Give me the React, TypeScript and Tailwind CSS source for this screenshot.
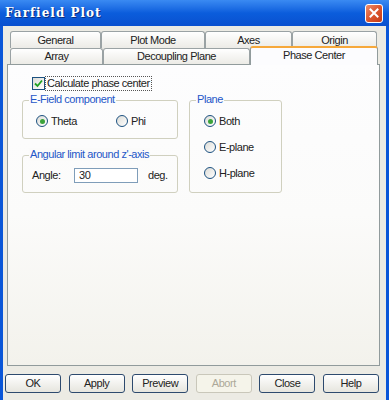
import React from "react";

const F = "font-['Liberation_Sans',Tahoma,sans-serif] tracking-[-0.45px]";

function Tab({ label, w, selected = false }: { label: string; w: number; selected?: boolean }) {
  if (selected) {
    return (
      <div
        className="relative z-10 mb-[-1px] h-[19px] flex items-center justify-center rounded-t-[3px] border-x border-[#919b9c] border-t-[2px] border-t-[#f6a83a] bg-[#fcfcfe] text-[11px] text-[#222] pb-[3px]"
        style={{ width: w }}
      >
        {label}
      </div>
    );
  }
  return (
    <div
      className="h-full flex items-center justify-center rounded-t-[3px] border border-b-0 border-[#9aa2a4] bg-gradient-to-b from-white to-[#ecebe6] text-[11px] text-[#222]"
      style={{ width: w }}
    >
      {label}
    </div>
  );
}

function Radio({ checked }: { checked?: boolean }) {
  return (
    <div className="w-[12px] h-[12px] shrink-0 rounded-full border border-[#1c5180] bg-gradient-to-br from-[#dcdcd7] to-white flex items-center justify-center">
      {checked && <div className="w-[5px] h-[5px] rounded-full bg-[#3aa33a]" />}
    </div>
  );
}

function Btn({ label, disabled }: { label: string; disabled?: boolean }) {
  return (
    <div
      className={
        "w-[56px] h-[19px] flex items-center justify-center rounded-[3px] border text-[11px] " +
        (disabled
          ? "border-[#c9c7ba] bg-[#f5f4ea] text-[#aca899]"
          : "border-[#2d4a6e] bg-gradient-to-b from-white to-[#e6e5de] text-[#222]")
      }
    >
      {label}
    </div>
  );
}

export default function App() {
  return (
    <div className={`w-[389px] h-[400px] bg-[#0a56d8] flex flex-col ${F}`}>
      {/* Title bar */}
      <div className="h-[26px] shrink-0 flex items-center justify-between pl-[5px] pr-[6px] bg-gradient-to-b from-[#3a8af2] via-[#0b5ddc] to-[#0a50cf]">
        <span className="font-['DejaVu_Serif',serif] font-bold text-[12px] text-white tracking-[1px] [text-shadow:1px_1px_0_#0a2f80]">
          Farfield Plot
        </span>
        <div className="w-[18px] h-[19px] rounded-[3px] border border-white bg-gradient-to-br from-[#ec8d6b] via-[#dc552c] to-[#c43a16] flex items-center justify-center">
          <svg width="10" height="10" viewBox="0 0 10 10">
            <path d="M1.5 1.5 L8.5 8.5 M8.5 1.5 L1.5 8.5" stroke="white" strokeWidth="2" strokeLinecap="square" />
          </svg>
        </div>
      </div>

      {/* Body */}
      <div className="flex-1 mx-[3px] bg-[#ecebe4] flex flex-col pt-[5px]">
        {/* Tab rows */}
        <div className="h-[17px] flex pl-[7px]">
          <Tab label="General" w={91} />
          <Tab label="Plot Mode" w={104} />
          <Tab label="Axes" w={87} />
          <Tab label="Origin" w={85} />
        </div>
        <div className="h-[16px] flex items-end pl-[7px]">
          <div className="h-full flex">
            <Tab label="Array" w={93} />
            <Tab label="Decoupling Plane" w={147} />
          </div>
          <Tab label="Phase Center" w={128} selected />
        </div>

        {/* Page */}
        <div className="h-[302px] ml-[4px] mr-[6px] border border-[#919b9c] bg-gradient-to-b from-[#fdfdfe] via-[#fbfbfa] to-[#f3f2ec] pl-[14px] pt-[11px]">
          <div className="h-[14px] flex items-center ml-[10px]">
            <div className="w-[13px] h-[13px] border border-[#1c5180] bg-gradient-to-br from-[#dcdcd7] to-white flex items-center justify-center">
              <svg width="9" height="9" viewBox="0 0 9 9">
                <path d="M1 4.5 L3.5 7 L8 1.5" stroke="#21a121" strokeWidth="1.8" fill="none" />
              </svg>
            </div>
            <span className="ml-[1px] px-[1px] outline outline-1 outline-dotted outline-[#555] text-[11px] leading-[13px] text-[#222]">
              Calculate phase center
            </span>
          </div>

          <div className="mt-[10px] flex gap-[11px]">
            <div className="w-[156px] flex flex-col">
              {/* E-Field */}
              <div className="relative h-[39px] rounded-[3px] border border-[#d0d0bf] flex items-center pt-[3px] pl-[13px]">
                <span className="absolute -top-[8px] left-[6px] px-[1px] bg-[#fcfcfd] text-[11px] leading-[13px] text-[#2457c8]">
                  E-Field component
                </span>
                <div className="w-[80px] flex items-center">
                  <Radio checked />
                  <span className="ml-[3px] text-[11px] text-[#222]">Theta</span>
                </div>
                <div className="flex items-center">
                  <Radio />
                  <span className="ml-[3px] text-[11px] text-[#222]">Phi</span>
                </div>
              </div>
              {/* Angular */}
              <div className="relative mt-[16px] h-[38px] rounded-[3px] border border-[#d0d0bf] flex items-center pt-[2px] pl-[9px]">
                <span className="absolute -top-[8px] left-[6px] px-[1px] bg-[#fbfbfa] text-[11px] leading-[13px] text-[#2457c8]">
                  Angular limit around z'-axis
                </span>
                <span className="w-[42px] text-[11px] text-[#222]">Angle:</span>
                <div className="w-[64px] h-[15px] border border-[#7f9db9] bg-white flex items-center pl-[4px] text-[11px] text-[#222]">
                  30
                </div>
                <span className="ml-[10px] text-[11px] text-[#222]">deg.</span>
              </div>
            </div>

            {/* Plane */}
            <div className="relative w-[93px] h-[93px] rounded-[3px] border border-[#d0d0bf] flex flex-col pl-[14px] pt-[13px] gap-[12px]">
              <span className="absolute -top-[8px] left-[6px] px-[1px] bg-[#fcfcfd] text-[11px] leading-[13px] text-[#2457c8]">
                Plane
              </span>
              <div className="h-[14px] flex items-center">
                <Radio checked />
                <span className="ml-[3px] text-[11px] text-[#222]">Both</span>
              </div>
              <div className="h-[14px] flex items-center">
                <Radio />
                <span className="ml-[3px] text-[11px] text-[#222]">E-plane</span>
              </div>
              <div className="h-[14px] flex items-center">
                <Radio />
                <span className="ml-[3px] text-[11px] text-[#222]">H-plane</span>
              </div>
            </div>
          </div>
        </div>

        {/* Buttons */}
        <div className="mt-[8px] flex justify-between pl-[2px] pr-[7px]">
          <Btn label="OK" />
          <Btn label="Apply" />
          <Btn label="Preview" />
          <Btn label="Abort" disabled />
          <Btn label="Close" />
          <Btn label="Help" />
        </div>
      </div>
    </div>
  );
}
